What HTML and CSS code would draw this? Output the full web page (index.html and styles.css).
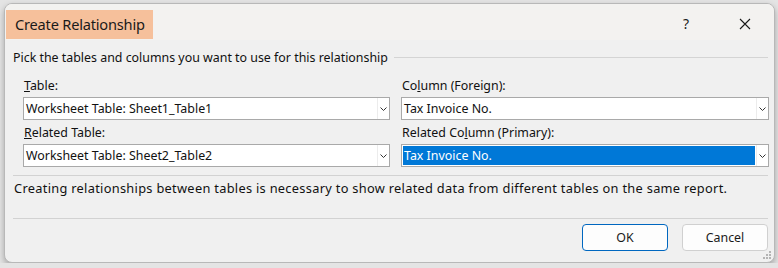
FILE: index.html
```html
<!DOCTYPE html>
<html lang="en">
<head>
    <meta charset="UTF-8">
    <title>Create Relationship</title>
    <link rel="stylesheet" href="styles.css">
</head>
<body>
    <div class="dialog">
        <div class="titlebar">
            <div class="title">Create Relationship</div>
            <div class="title-help">?</div>
            <div class="title-close">
                <svg width="12" height="12" viewBox="0 0 12 12">
                    <path d="M1 1 L11 11 M11 1 L1 11" stroke="#1a1a1a" stroke-width="1.1" fill="none"/>
                </svg>
            </div>
        </div>

        <div class="content">
            <div class="group-head">
                <span>Pick the tables and columns you want to use for this relationship</span>
                <div class="group-line"></div>
            </div>

            <div class="fields">
                <div class="field">
                    <div class="label"><u>T</u>able:</div>
                    <div class="combo">
                        <div class="combo-text">Worksheet Table: Sheet1_Table1</div>
                        <div class="combo-btn"><svg width="7" height="4" viewBox="0 0 7 4"><path d="M0.5 0.5 L3.5 3.5 L6.5 0.5" stroke="#333" fill="none"/></svg></div>
                    </div>
                </div>
                <div class="field">
                    <div class="label">Co<u>l</u>umn (Foreign):</div>
                    <div class="combo">
                        <div class="combo-text">Tax Invoice No.</div>
                        <div class="combo-btn"><svg width="7" height="4" viewBox="0 0 7 4"><path d="M0.5 0.5 L3.5 3.5 L6.5 0.5" stroke="#333" fill="none"/></svg></div>
                    </div>
                </div>
                <div class="field">
                    <div class="label"><u>R</u>elated Table:</div>
                    <div class="combo">
                        <div class="combo-text">Worksheet Table: Sheet2_Table2</div>
                        <div class="combo-btn"><svg width="7" height="4" viewBox="0 0 7 4"><path d="M0.5 0.5 L3.5 3.5 L6.5 0.5" stroke="#333" fill="none"/></svg></div>
                    </div>
                </div>
                <div class="field">
                    <div class="label">Related Co<u>l</u>umn (Primary):</div>
                    <div class="combo">
                        <div class="combo-text selected">Tax Invoice No.</div>
                        <div class="combo-btn"><svg width="7" height="4" viewBox="0 0 7 4"><path d="M0.5 0.5 L3.5 3.5 L6.5 0.5" stroke="#333" fill="none"/></svg></div>
                    </div>
                </div>
            </div>

            <div class="separator"></div>
            <p class="note">Creating relationships between tables is necessary to show related data from different tables on the same report.</p>
            <div class="separator bottom"></div>

            <div class="buttons">
                <button class="btn primary">OK</button>
                <button class="btn">Cancel</button>
            </div>
        </div>

        <svg class="grip" width="10" height="10" viewBox="0 0 10 10">
            <rect x="7" y="1" width="2" height="2" fill="#b4b4b4"/>
            <rect x="4" y="4" width="2" height="2" fill="#b4b4b4"/>
            <rect x="7" y="4" width="2" height="2" fill="#b4b4b4"/>
            <rect x="1" y="7" width="2" height="2" fill="#b4b4b4"/>
            <rect x="4" y="7" width="2" height="2" fill="#b4b4b4"/>
            <rect x="7" y="7" width="2" height="2" fill="#b4b4b4"/>
        </svg>
    </div>
</body>
</html>
```

FILE: styles.css
```css
body {
    margin: 0;
    padding: 0;
    background-color: #e4e4e4;
    font-family: "Noto Sans", "Open Sans", sans-serif;
    font-size: 12.4px;
    color: #111;
}
.dialog {
    position: relative;
    box-sizing: border-box;
    width: 771px;
    height: 260px;
    margin: 3px 0 0 4px;
    border: 1px solid #b8b8b8;
    border-radius: 8px;
    background-color: #f0f0f0;
    overflow: hidden;
    box-shadow: 0 3px 6px rgba(0, 0, 0, 0.28);
}
.titlebar {
    height: 36px;
    background-color: #f3f2f0;
    display: flex;
    align-items: center;
}
.title {
    margin: 4px 0 0 1px;
    width: 147px;
    height: 29px;
    box-sizing: border-box;
    padding-left: 9px;
    background-color: #f6c09b;
    font-size: 14.6px;
    line-height: 29px;
    color: #1a1a1a;
    letter-spacing: -0.2px;
}
.title-help {
    margin-left: auto;
    font-size: 14px;
    color: #1a1a1a;
    padding-top: 2px;
}
.title-close {
    width: 12px;
    height: 12px;
    margin: 2px 23px 0 50px;
}
.content {
    padding: 9px 6px 0 8px;
}
.group-head {
    display: flex;
    align-items: center;
    line-height: 17px;
}
.group-line {
    flex: 1;
    height: 1px;
    margin: 0 0 1px 6px;
    background-color: #d4d4d4;
}
.fields {
    display: grid;
    grid-template-columns: 367px 368px;
    column-gap: 11px;
    row-gap: 4px;
    margin: 11px 0 0 10px;
}
.label {
    line-height: 17px;
    margin: 0 0 3px 1px;
}
.combo {
    display: flex;
    height: 23px;
    box-sizing: border-box;
    border: 1px solid #a9a9a9;
    background-color: #fff;
}
.combo-text {
    flex: 1;
    margin: 1px;
    padding-left: 1px;
    line-height: 19px;
}
.combo-text.selected {
    background-color: #0078d7;
    color: #fff;
}
.combo-btn {
    width: 11px;
    border-left: 1px solid #ececec;
    display: flex;
    align-items: center;
    justify-content: center;
}
.separator {
    height: 1px;
    margin: 8px 0 0 0;
    background-color: #d2d2d2;
}
.separator.bottom {
    margin-top: 0;
}
.note {
    margin: 4px 0 0 1px;
    height: 38px;
    line-height: 17px;
    font-size: 12.8px;
    letter-spacing: 0.3px;
}
.buttons {
    display: flex;
    justify-content: flex-end;
    gap: 14px;
    margin-top: 5px;
}
.btn {
    width: 86px;
    height: 27px;
    border: 1px solid #d0d0d0;
    border-radius: 4px;
    background-color: #fdfdfd;
    font-family: "Noto Sans", "Open Sans", sans-serif;
    font-size: 12.4px;
    color: #1a1a1a;
    padding: 0;
}
.btn.primary {
    border-color: #0067c0;
}
.grip {
    position: absolute;
    right: 2px;
    bottom: 2px;
}
```
